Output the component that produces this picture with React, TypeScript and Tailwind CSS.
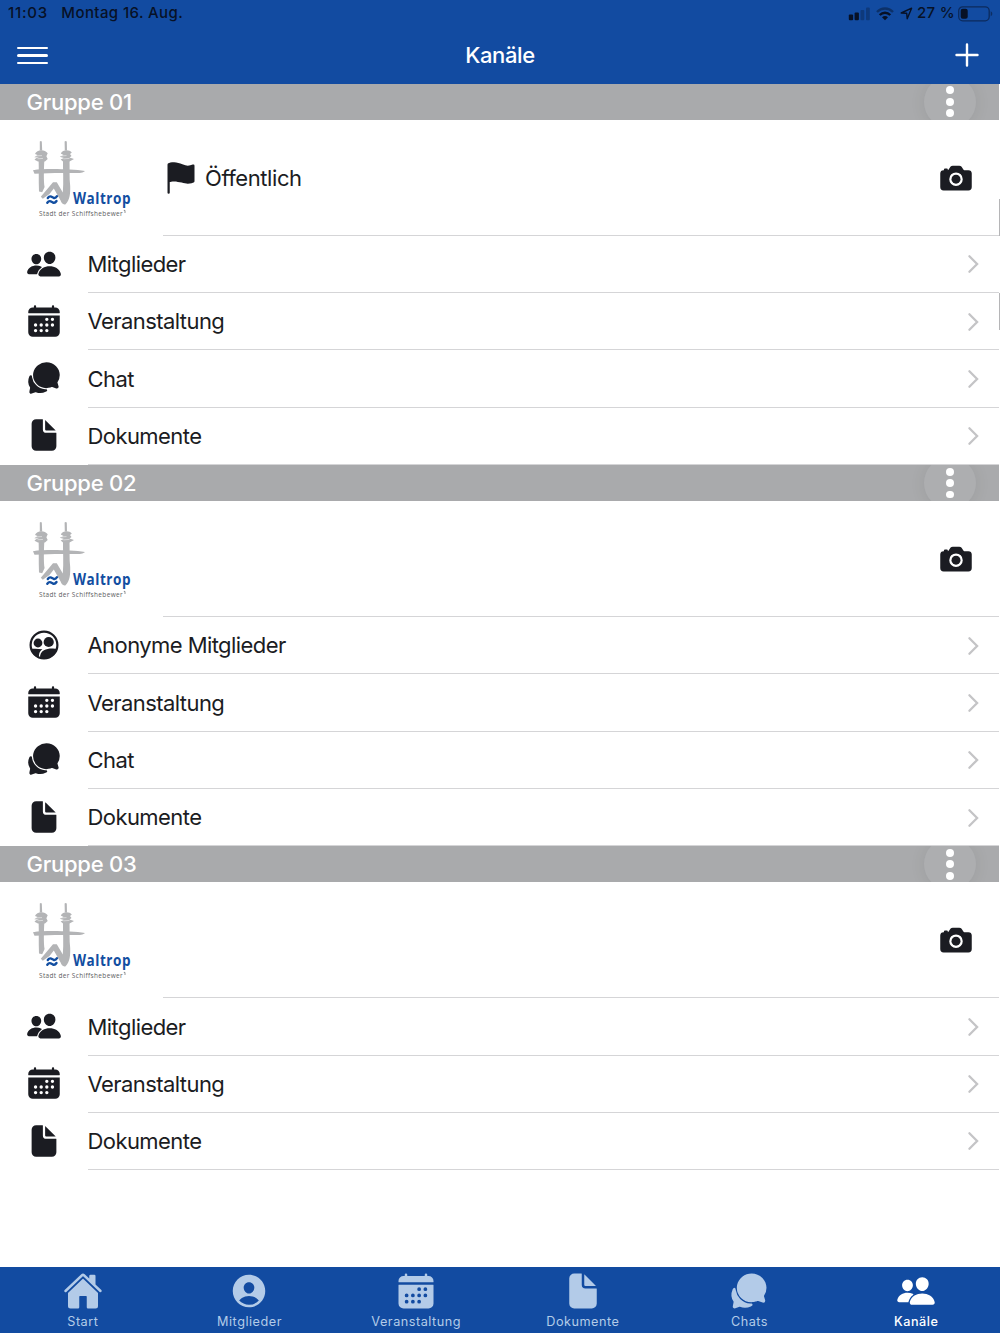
import React from "react";
import {
  IoCalendar,
  IoCamera,
  IoChatbubbles,
  IoDocument,
  IoFlag,
  IoHome,
  IoPeople,
  IoPersonCircle,
} from "react-icons/io5";

type IconComponent = React.ComponentType<{ className?: string }>;

/** Two people inside a ring. */
function AnonymousIcon({ className }: { className?: string }) {
  return (
    <svg viewBox="0 0 36 36" className={className}>
      <circle cx="18" cy="18" r="13.4" fill="none" stroke="currentColor" strokeWidth="2.2" />
      <circle cx="12" cy="16" r="4.4" fill="currentColor" />
      <circle cx="22.7" cy="15" r="5.1" fill="currentColor" />
      <path
        d="M4.6 22C7.5 21.5 12 21.6 16.4 22.2C14.2 23.8 13 26 13 28.4L12.5 30.8C9 29.6 6 26.6 4.6 22Z"
        fill="currentColor"
      />
      <path
        d="M14 31.2C13.8 27.3 15.3 24.8 18 23.3C20.5 21.9 24 21.4 27 21.6L31.4 22C29 29.5 22 33.3 14 31.2Z"
        fill="currentColor"
      />
    </svg>
  );
}

function WaltropLogo() {
  return (
    <svg viewBox="0 0 115 90" className="h-[90px] w-[115px] shrink-0">
      <g fill="#b3b4b6">
        <path d="M14.8 6.5Q15.8 5.3 16.8 6.5L17.2 15.5H14.8ZM39.6 6.5Q40.7 5.3 41.8 6.5L42 15.5H39.8Z" />
        <path d="M10 19C11.5 14.5 19.5 13.6 22.7 18.2L21.4 21.2L22.7 24L20 26.5H13L9.5 24.7L11 23.3L14 22.6L9.3 22.2L12.5 20Z" />
        <path d="M35.8 18.6C37.8 14.2 44.5 14.5 46.8 17.5L45 19L46.5 21L44.5 22.6L49 24L44.5 26.5H38L35.6 24.5L39 23L34.8 21.8L38.5 20Z" />
        <path d="M13.6 24H19.4C18.8 35 18.6 47 19.6 52L17.2 57.3L14 56.5C13.5 45 14 35 13.6 24Z" />
        <path d="M38 24H44.5C44.8 34 44.2 43 45.2 51C45.4 58 45 65 40.3 69.4C37.8 70 36.4 67.5 35.6 65.5L28.8 53.5L24.5 59L17.8 63.8L15.8 61.8L28 47.2L31.8 47.2L37.8 57.5C38.8 47 37.8 35 38 24Z" />
        <path d="M8 35.2C20 33.4 45 33.9 60 36C58 38.6 50 38.1 44 38C33 37.7 22 38.1 9.5 38.8Z" />
      </g>
      <path
        d="M10.5 20.9L17 20.6M12.5 23.8L18 23.4M36 20.9L41.5 20.6M38.5 23.9L44.5 23.4"
        stroke="#fff" strokeWidth=".8" opacity=".6"
      />
      <g fill="none" stroke="#124ea1" strokeWidth="2.4" strokeLinecap="round">
        <path d="M22.8 63C25 60 26.5 61.8 28.5 62.8C30.3 63.5 31.5 62 32 61.2" />
        <path d="M22.3 67.8C24.5 64.8 26 66.6 28 67.6C29.8 68.3 31 66.8 31.5 66" />
      </g>
      <text
        x="48" y="69" textLength="58" lengthAdjust="spacingAndGlyphs"
        fill="#124ea1" className="font-['Open_Sans'] text-[15.4px] font-bold tracking-[0.6px]"
      >
        Waltrop
      </text>
      <text
        x="14" y="80.5" textLength="84" lengthAdjust="spacingAndGlyphs"
        fill="#5c5d61" className="font-['Open_Sans'] text-[7px] tracking-[0.4px]"
      >
        Stadt der Schiffshebewer
      </text>
      <path d="M98.8 75.4H100V78" fill="none" stroke="#66676b" strokeWidth=".7" />
    </svg>
  );
}

function Chevron() {
  return (
    <svg viewBox="0 0 12 20" className="mr-5 h-5 w-3 shrink-0">
      <path d="M2.4 2.3L10.1 10L2.4 17.7" fill="none" stroke="#c4c4c6" strokeWidth="2.3" strokeLinecap="round" />
    </svg>
  );
}

function StatusBar() {
  return (
    <div className="flex h-[27px] items-center justify-between pl-2 pr-[7px] text-[15px] font-medium text-[#071126]">
      <div className="flex gap-[14px]">
        <span className="tracking-[0.75px]">11:03</span>
        <span className="-ml-[0.5px] tracking-[0.4px]">Montag 16. Aug.</span>
      </div>
      <div className="flex items-center">
        <svg viewBox="0 0 22 14" className="h-[14px] w-[22px]">
          <g fill="#071126">
            <rect x=".8" y="7.5" width="4.3" height="5.8" rx="1" />
            <rect x="6.6" y="5.5" width="4.3" height="7.8" rx="1" />
            <g opacity=".3">
              <rect x="12.5" y="3.1" width="3.8" height="10.2" rx="1" />
              <rect x="18" y=".5" width="3.8" height="12.8" rx="1" />
            </g>
          </g>
        </svg>
        <svg viewBox="0 0 18 14" className="ml-[6px] h-[14px] w-[18px]">
          <path d="M1 5C5.5.4 12.5.4 17 5" fill="none" stroke="#071126" strokeWidth="2.4" opacity=".45" />
          <path d="M3.7 8C6.8 4.9 11.2 4.9 14.3 8" fill="none" stroke="#071126" strokeWidth="2.4" />
          <path d="M6 10.2C7.7 8.5 10.3 8.5 12 10.2L9 13.2Z" fill="#071126" />
        </svg>
        <svg viewBox="0 0 13 13" className="ml-[6px] h-[13px] w-[13px]">
          <path d="M1.2 6L11.6 1.2L7.2 11.8L6.7 6.3Z" fill="none" stroke="#071126" strokeWidth="1.4" strokeLinejoin="round" />
        </svg>
        <span className="ml-[4.5px] w-[37px] whitespace-nowrap tracking-[0.3px]">27 %</span>
        <svg viewBox="0 0 35 16" className="ml-[4px] h-4 w-[35px]">
          <rect x=".7" y=".8" width="30.5" height="14" rx="4" fill="none" stroke="#071126" strokeOpacity=".55" strokeWidth="1.3" />
          <rect x="2.7" y="2.8" width="7" height="10" rx="2" fill="#071126" />
          <path d="M32.7 5.3C34.8 6.3 34.8 9.3 32.7 10.3Z" fill="#071126" opacity=".5" />
        </svg>
      </div>
    </div>
  );
}

type Item = { label: string; icon: IconComponent };

const members: Item = { label: "Mitglieder", icon: IoPeople };
const anonymous: Item = { label: "Anonyme Mitglieder", icon: AnonymousIcon };
const events: Item = { label: "Veranstaltung", icon: IoCalendar };
const chat: Item = { label: "Chat", icon: IoChatbubbles };
const documents: Item = { label: "Dokumente", icon: IoDocument };

const groups: { title: string; isPublic?: boolean; items: Item[] }[] = [
  { title: "Gruppe 01", isPublic: true, items: [members, events, chat, documents] },
  { title: "Gruppe 02", items: [anonymous, events, chat, documents] },
  { title: "Gruppe 03", items: [members, events, documents] },
];

function Group({ title, isPublic, items }: { title: string; isPublic?: boolean; items: Item[] }) {
  return (
    <section className="mr-px">
      <div className="flex h-[36.3px] items-center justify-between overflow-hidden bg-[#a9aaac] pl-[26.5px] pr-[23px]">
        <h2 className="pt-px text-[22px] font-medium tracking-[-0.25px] text-white">{title}</h2>
        <div className="flex size-[52px] shrink-0 flex-col items-center justify-center gap-[3.6px] rounded-full bg-[#adaeb0] shadow-[0_1px_16px_rgba(0,0,0,0.08)]">
          <span className="size-[7.8px] rounded-full bg-white" />
          <span className="size-[7.8px] rounded-full bg-white" />
          <span className="size-[7.8px] rounded-full bg-white" />
        </div>
      </div>
      <div className="flex h-[115.8px] pl-[25px]">
        <div className="w-[138px] shrink-0 pt-[15px]">
          <WaltropLogo />
        </div>
        <div className="flex flex-1 items-center border-b border-[#d5d5d7] pr-[25px] pt-px">
          {isPublic && (
            <>
              <IoFlag className="-ml-[0.5px] size-[36px]" />
              <span className="ml-[6.5px] pt-[1.5px] text-[22px] tracking-[-0.42px]">Öffentlich</span>
            </>
          )}
          <IoCamera className="ml-auto size-[36px]" />
        </div>
      </div>
      {items.map(({ label, icon: Icon }) => (
        <div key={label} className="flex h-[57.3px] pl-[26px]">
          <div className="flex w-[62px] shrink-0 items-center pb-[1.5px]">
            <Icon className="size-[36px]" />
          </div>
          <div className="flex flex-1 items-center justify-between border-b border-[#d5d5d7] pt-px">
            <span className="-ml-[0.5px] pt-[0.5px] text-[22px] tracking-[-0.57px]">{label}</span>
            <Chevron />
          </div>
        </div>
      ))}
    </section>
  );
}

const tabs: { label: string; icon: IconComponent; active?: boolean }[] = [
  { label: "Start", icon: IoHome },
  { label: "Mitglieder", icon: IoPersonCircle },
  { label: "Veranstaltung", icon: IoCalendar },
  { label: "Dokumente", icon: IoDocument },
  { label: "Chats", icon: IoChatbubbles },
  { label: "Kanäle", icon: IoPeople, active: true },
];

export default function App() {
  return (
    <div className="flex h-[1334px] w-[1000px] flex-col overflow-hidden bg-white font-['Inter',sans-serif] text-[#1b1c22]">
      <header className="h-[83.6px] shrink-0 bg-[#124ba1]">
        <StatusBar />
        <div className="grid h-[56px] grid-cols-3 items-center px-[17px] text-white">
          <div className="flex w-[30.5px] flex-col gap-[5px] pt-px">
            <span className="h-[2.5px] rounded-full bg-white" />
            <span className="h-[2.5px] rounded-full bg-white" />
            <span className="h-[2.5px] rounded-full bg-white" />
          </div>
          <h1 className="text-center text-[22px] font-medium tracking-[-0.4px]">Kanäle</h1>
          <svg viewBox="0 0 24 24" className="mr-[4px] size-6 justify-self-end">
            <path d="M12 1.5V22.5M1.5 12H22.5" stroke="currentColor" strokeWidth="2.4" strokeLinecap="round" />
          </svg>
        </div>
      </header>
      <main className="relative flex-1">
        <span className="absolute right-0 top-[115px] h-[37px] w-px bg-[#b5b5b7]" />
        <span className="absolute right-0 top-[209px] h-[37px] w-px bg-[#b5b5b7]" />
        {groups.map((group) => (
          <Group key={group.title} {...group} />
        ))}
      </main>
      <nav className="mb-px grid h-[66px] shrink-0 grid-cols-6 bg-[#124ba1] pt-[4px]">
        {tabs.map(({ label, icon: Icon, active }) => (
          <div key={label} className={`-ml-px flex flex-col items-center ${active ? "text-white" : "text-[#b3cbe8]"}`}>
            <Icon className="size-[40px]" />
            <span className={`mt-[2px] text-[12.7px] leading-[18px] tracking-[0.5px] ${active ? "font-medium" : ""}`}>{label}</span>
          </div>
        ))}
      </nav>
    </div>
  );
}
